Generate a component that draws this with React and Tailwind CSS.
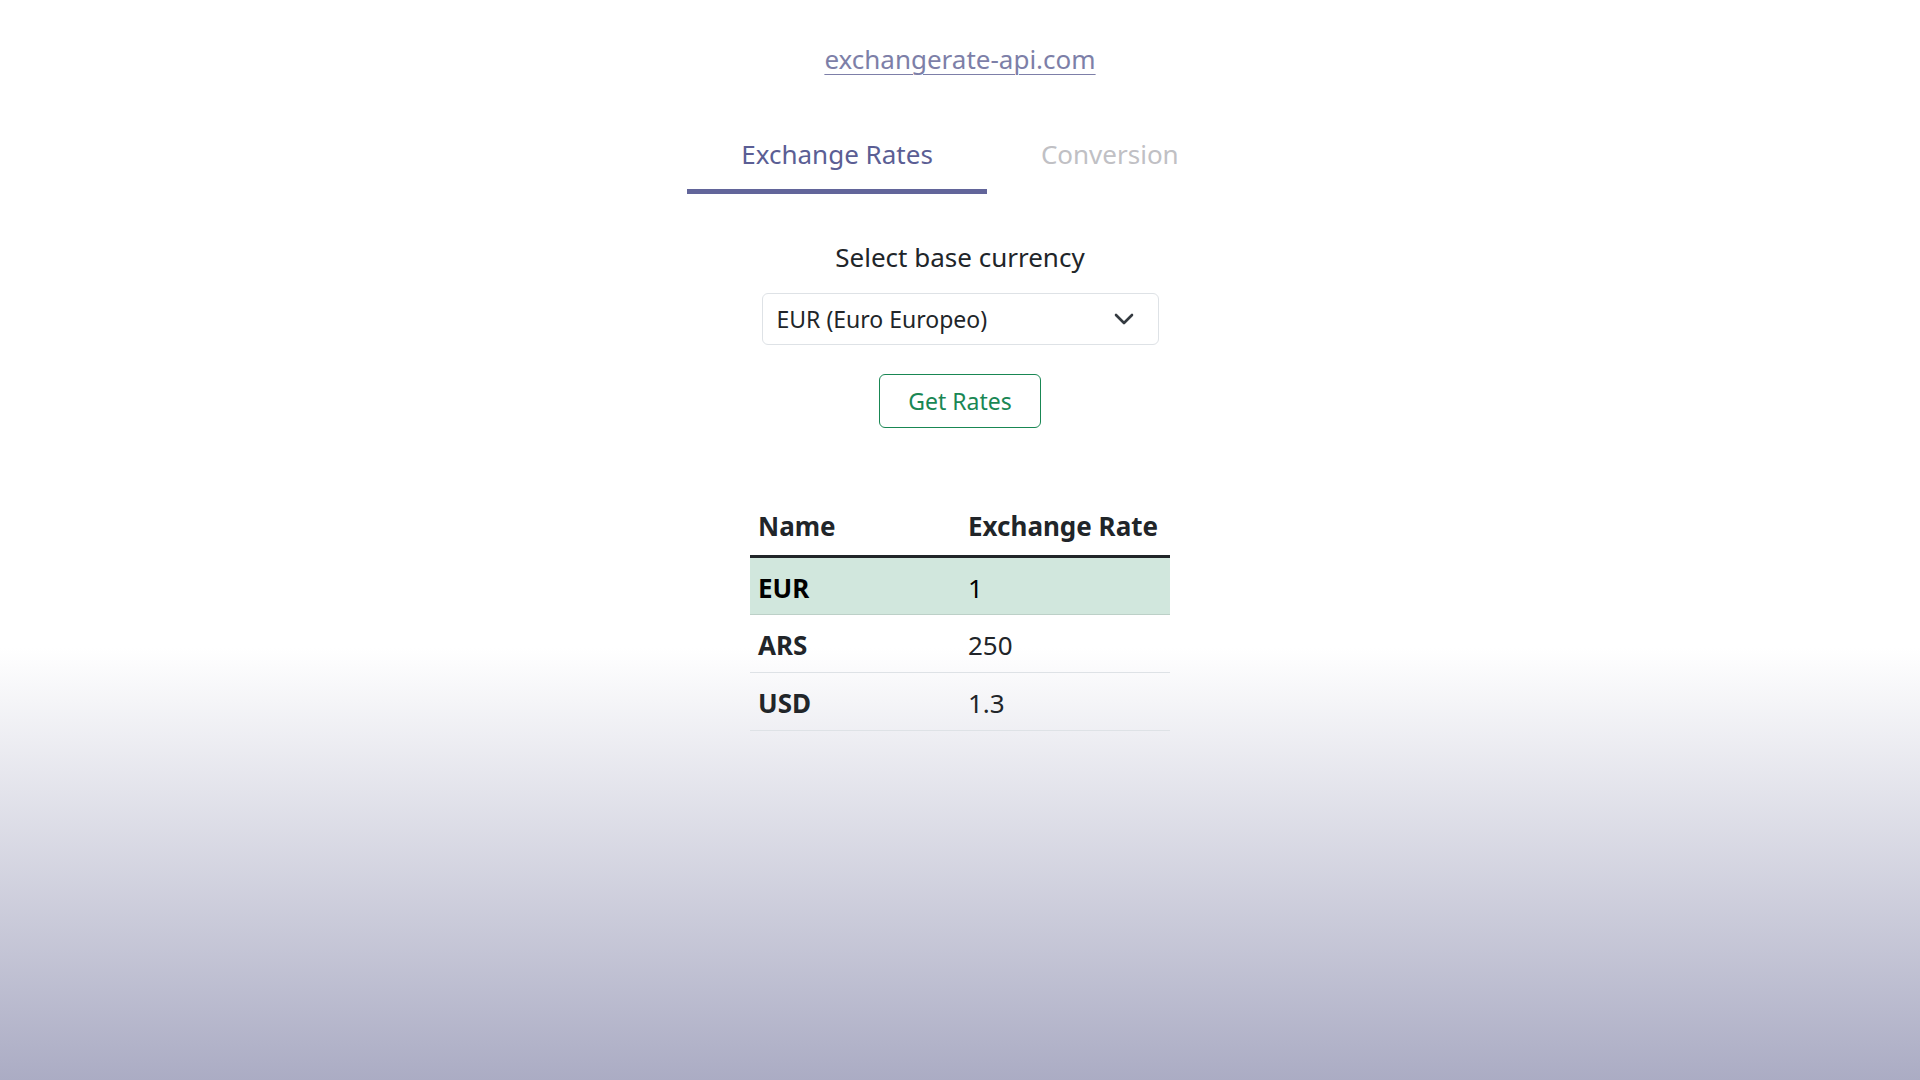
import React from "react";

const rows = [
  { name: "EUR", rate: "1", active: true },
  { name: "ARS", rate: "250" },
  { name: "USD", rate: "1.3" },
];

function Chevron() {
  return (
    <svg width="20" height="12" viewBox="0 0 20 12" fill="none">
      <path d="M2 2l8 8 8-8" stroke="#343a40" strokeWidth="2.6" strokeLinecap="round" strokeLinejoin="round" />
    </svg>
  );
}

export default function App() {
  return (
    <div
      className="min-h-screen w-full flex flex-col items-center bg-[linear-gradient(180deg,#ffffff_60%,#abacc4_100%)] text-[#212529]"
      style={{ fontFamily: '"Noto Sans", "Open Sans", sans-serif' }}
    >
      <a href="#" className="pt-[41px] text-[26px] leading-[36px] text-[#7d7fa8] underline decoration-1 underline-offset-[5px]">
        exchangerate-api.com
      </a>

      <div className="mt-[55px] flex">
        <div className="px-[54px] pt-[2px] pb-[15px] border-b-[5px] border-[#62659a] text-[26px] leading-[40px] text-[#5b5e94]">
          Exchange Rates
        </div>
        <div className="px-[54px] pt-[2px] pb-[15px] border-b-[5px] border-transparent text-[26px] leading-[40px] text-[#c0c0c4]">
          Conversion
        </div>
      </div>

      <div className="mt-[45px] text-[26px] leading-[36px] text-[#212529]">Select base currency</div>

      <div className="mt-[18px] w-[397px] h-[52px] border border-[#dee2e6] rounded-[6px] bg-white flex items-center justify-between pl-[14px] pr-[24px]">
        <span className="text-[23px] leading-[32px] text-[#212529]">EUR (Euro Europeo)</span>
        <Chevron />
      </div>

      <button className="mt-[29px] w-[162px] h-[54px] border border-[#198754] rounded-[6px] text-[23px] leading-[32px] text-[#198754] bg-white">
        Get Rates
      </button>

      <table className="mt-[71px] w-[420px] border-collapse text-[26px]">
        <thead>
          <tr className="border-b-[3px] border-[#212529]">
            <th className="w-[210px] h-[57px] px-[8px] text-left font-bold">Name</th>
            <th className="h-[57px] px-[8px] text-left font-bold">Exchange Rate</th>
          </tr>
        </thead>
        <tbody>
          {rows.map((r) => (
            <tr
              key={r.name}
              className={r.active ? "bg-[#d1e7dd] text-black border-b border-[#bcd0c7]" : "border-b border-[#dee2e6]"}
            >
              <th className="h-[58px] px-[8px] pt-[5px] text-left font-bold">{r.name}</th>
              <td className="h-[58px] px-[8px] pt-[5px]">{r.rate}</td>
            </tr>
          ))}
        </tbody>
      </table>
    </div>
  );
}
